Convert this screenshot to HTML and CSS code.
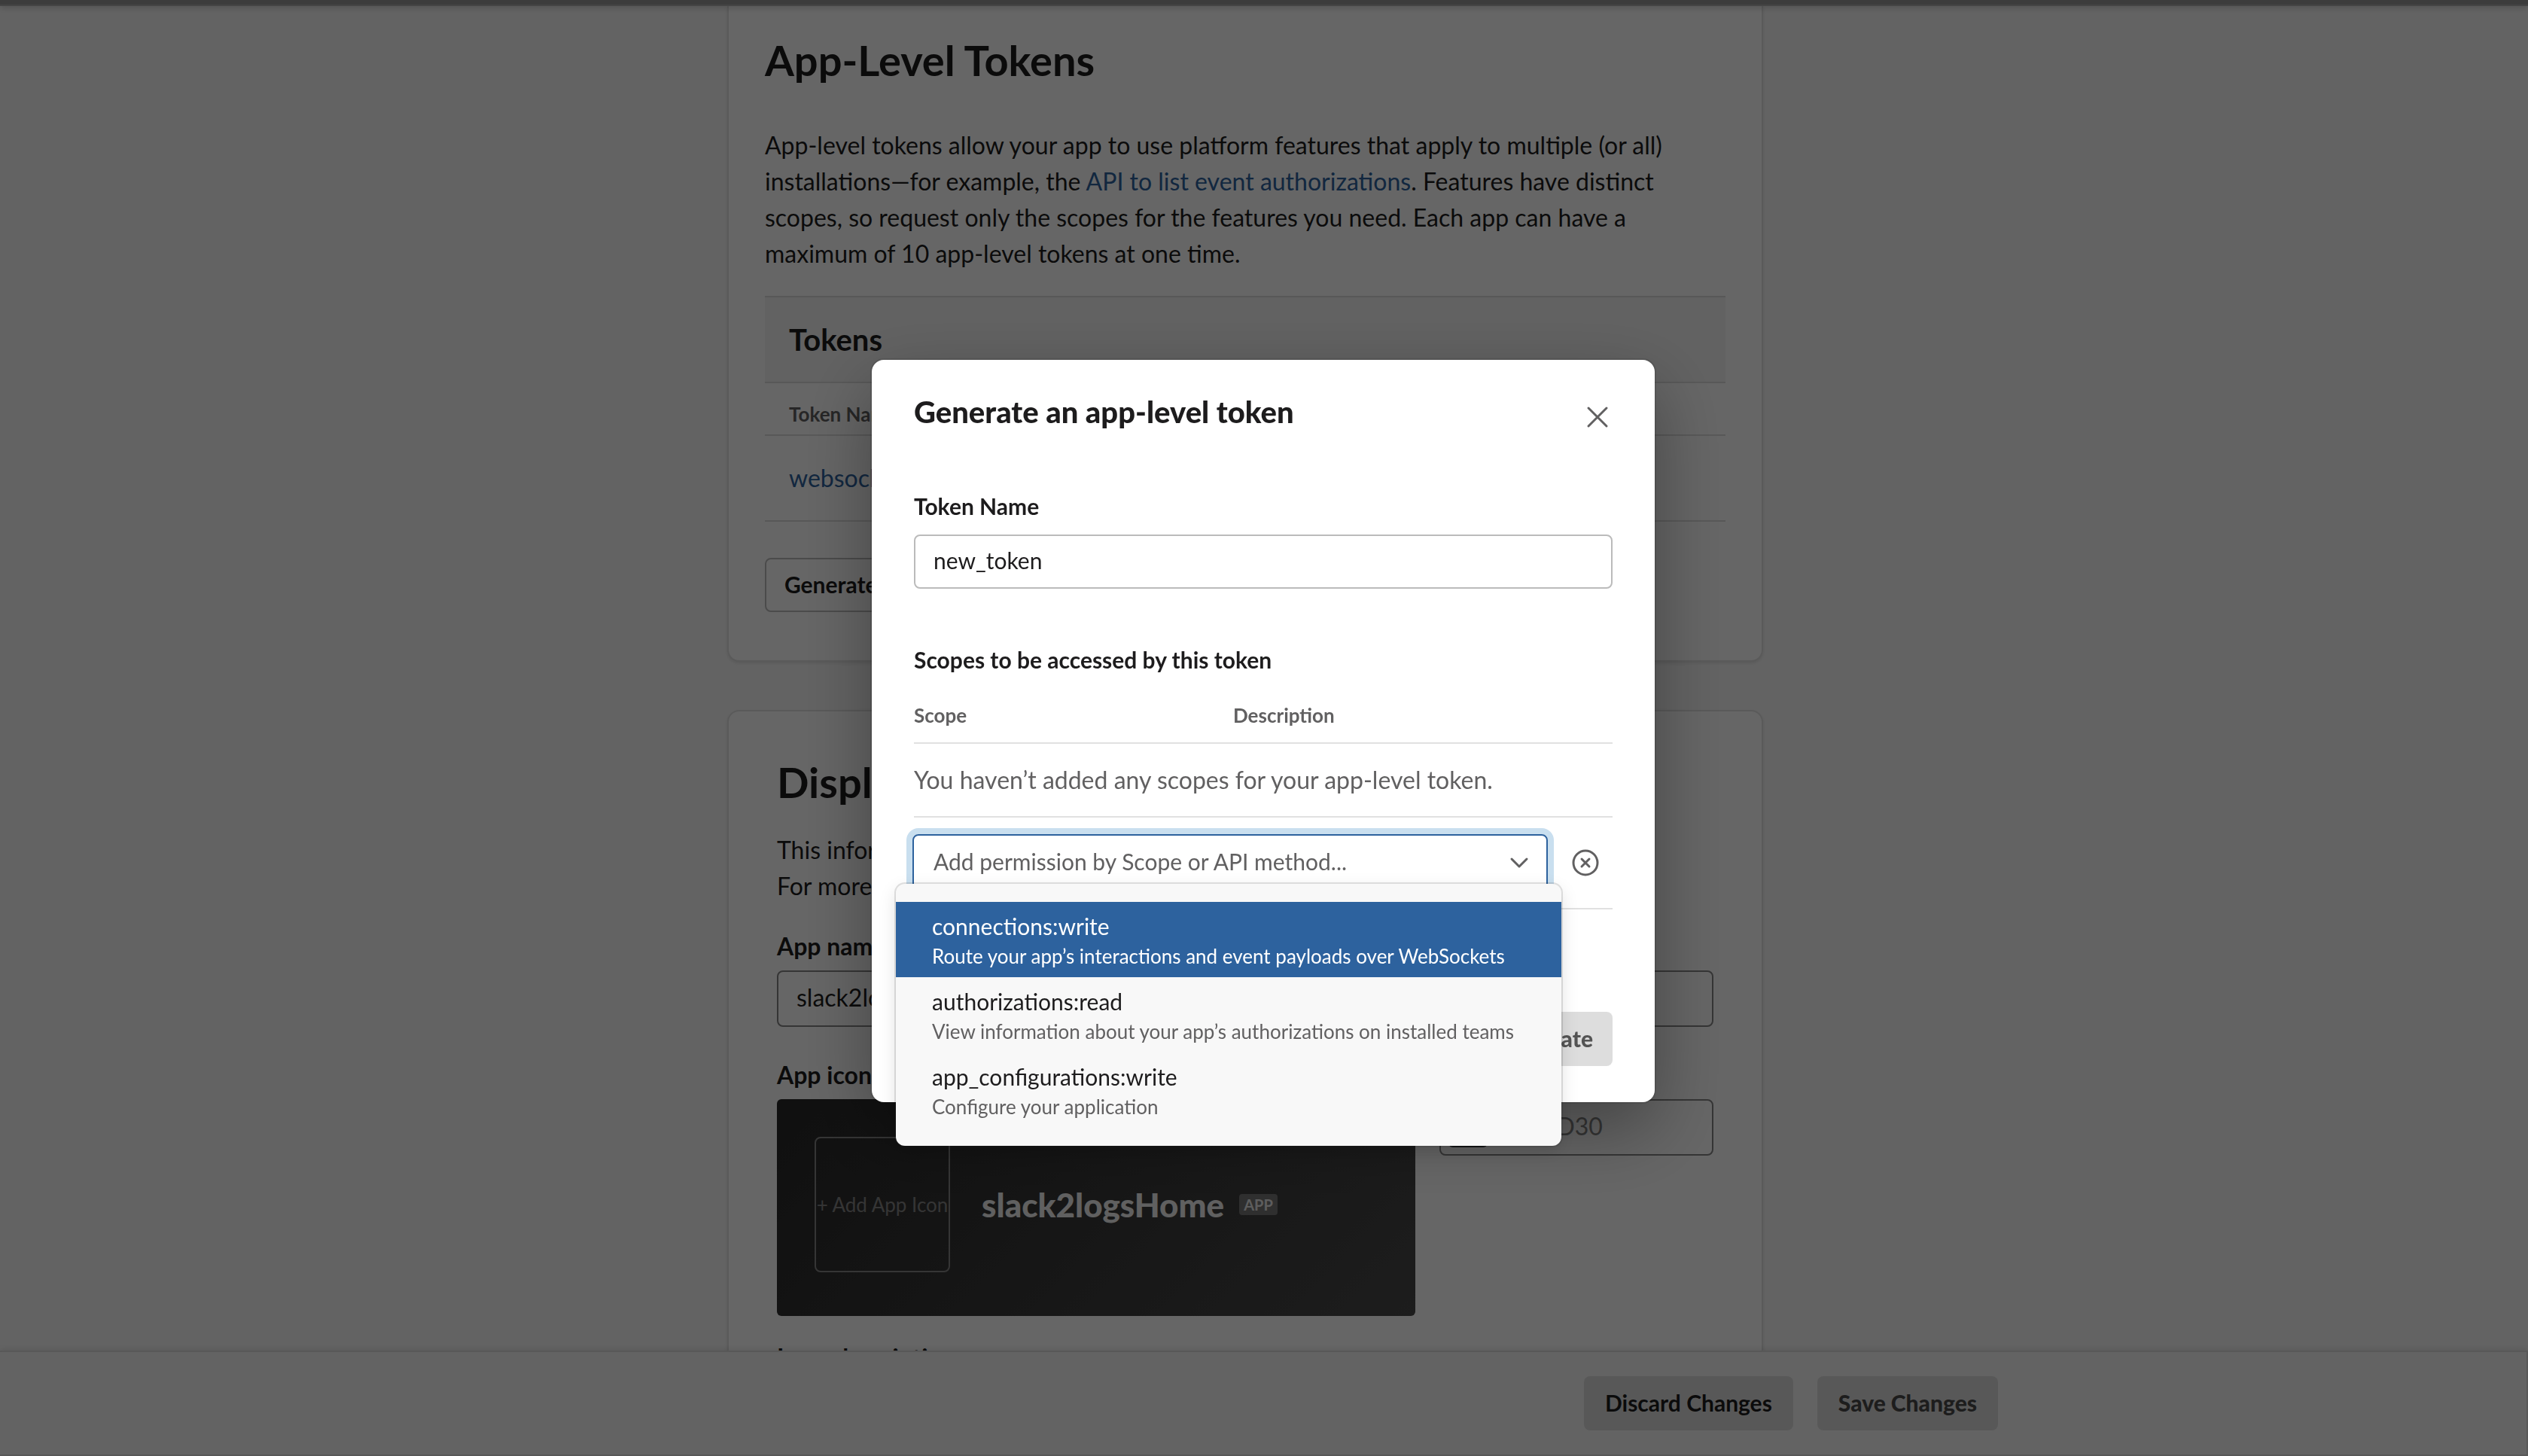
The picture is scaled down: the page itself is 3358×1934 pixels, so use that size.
FILE: index.html
```html
<!DOCTYPE html>
<html lang="en">
<head>
<meta charset="utf-8">
<title>App-Level Tokens</title>
<link rel="stylesheet" href="styles.css">
</head>
<body>
<div class="page">
  <header class="topbar"></header>

  <main class="content">
    <section class="card card--tokens">
      <h1 class="card-title">App-Level Tokens</h1>
      <p class="lead">App-level tokens allow your app to use platform features that apply to multiple (or all) installations—for example, the <a class="link" href="#">API to list event authorizations</a>. Features have distinct scopes, so request only the scopes for the features you need. Each app can have a maximum of 10 app-level tokens at one time.</p>
      <table class="tokens">
        <caption class="tokens-caption">Tokens</caption>
        <thead><tr><th scope="col">Token Name</th></tr></thead>
        <tbody><tr><td><a class="link" href="#">websocket</a></td></tr></tbody>
      </table>
      <button class="btn btn--outline" type="button">Generate Token and Scopes</button>
    </section>

    <section class="card card--display">
      <h1 class="card-title">Display Information</h1>
      <p class="info">This information will be shown in the Slack App Directory.<br>For more details, view our guidelines.</p>
      <label class="label" for="app-name">App name</label>
      <input class="field field--page" id="app-name" type="text" value="slack2logsHome">
      <div class="branding">
        <div class="branding-icon">
          <span class="label">App icon</span>
          <div class="preview">
            <button class="add-icon" type="button">+ Add App Icon</button>
            <strong class="preview-name">slack2logsHome</strong>
            <span class="badge">APP</span>
          </div>
        </div>
        <div class="branding-color">
          <label class="label" for="bg-color">Color</label>
          <div class="color-field">
            <span class="swatch"></span>
            <input class="color-input" id="bg-color" type="text" placeholder="#2C2D30">
          </div>
        </div>
      </div>
      <label class="label" for="long-description">Long description</label>
      <textarea class="field field--page" id="long-description"></textarea>
    </section>
  </main>

  <footer class="savebar">
    <div class="savebar-inner">
      <button class="btn btn--solid" type="button">Discard Changes</button>
      <button class="btn btn--solid btn--disabled" type="button" disabled>Save Changes</button>
    </div>
  </footer>
</div>

<div class="overlay">
  <div class="modal" role="dialog" aria-labelledby="modal-title">
    <div class="modal-head">
      <h2 class="modal-title" id="modal-title">Generate an app-level token</h2>
      <button class="icon-btn" type="button" aria-label="Close">
        <svg width="36" height="36" viewBox="0 0 36 36" fill="none" stroke="currentColor" stroke-width="3" stroke-linecap="round"><path d="M6 6 30 30M30 6 6 30"/></svg>
      </button>
    </div>

    <label class="modal-label" for="token-name">Token Name</label>
    <input class="field field--modal" id="token-name" type="text" value="new_token">

    <h3 class="modal-label modal-label--scopes">Scopes to be accessed by this token</h3>
    <table class="scopes">
      <thead><tr><th scope="col">Scope</th><th scope="col">Description</th></tr></thead>
      <tbody><tr><td colspan="2">You haven’t added any scopes for your app-level token.</td></tr></tbody>
    </table>
    <div class="scope-row">
      <div class="combo">
        <input class="combo-input" type="text" role="combobox" aria-label="Scope" aria-expanded="true" placeholder="Add permission by Scope or API method...">
        <svg class="combo-arrow" width="28" height="20" viewBox="0 0 28 20" fill="none" stroke="currentColor" stroke-width="3" stroke-linecap="round" stroke-linejoin="round"><path d="M4 5 14 15 24 5"/></svg>
        <ul class="menu" role="listbox">
          <li class="option option--active" role="option" aria-selected="true"><span class="option-name">connections:write</span><span class="option-text">Route your app’s interactions and event payloads over WebSockets</span></li>
          <li class="option" role="option"><span class="option-name">authorizations:read</span><span class="option-text">View information about your app’s authorizations on installed teams</span></li>
          <li class="option" role="option"><span class="option-name">app_configurations:write</span><span class="option-text">Configure your application</span></li>
        </ul>
      </div>
      <button class="icon-btn" type="button" aria-label="Remove">
        <svg width="40" height="40" viewBox="0 0 40 40" fill="none" stroke="currentColor" stroke-width="3" stroke-linecap="round"><circle cx="20" cy="20" r="16"/><path d="M15 15 25 25M25 15 15 25"/></svg>
      </button>
    </div>

    <div class="modal-foot">
      <button class="btn btn--solid btn--muted" type="button" disabled>Generate</button>
    </div>
  </div>
</div>
</body>
</html>
```

FILE: styles.css
```css
* { box-sizing: border-box; }

body {
  margin: 0;
  font-family: Lato, "Liberation Sans", sans-serif;
  font-size: 32px;
  line-height: 48px;
  color: #1d1c1d;
  background: #f8f8f8;
}

h1, h2, h3, p, ul { margin: 0; padding: 0; }
button, input, textarea { font: inherit; color: inherit; }

.page {
  display: flex;
  flex-direction: column;
  height: 100vh;
  overflow: hidden;
}

.topbar {
  flex: none;
  height: 8px;
  background: #969696;
  border-bottom: 2px solid #aaa;
  box-shadow: 0 2px 8px rgba(0, 0, 0, .2);
  z-index: 1;
}

.content {
  flex: 1;
  min-height: 0;
  overflow: hidden;
  display: flex;
  flex-direction: column;
  align-items: center;
  gap: 64px;
  padding-right: 50px;
}

.card {
  flex: none;
  width: 100%;
  max-width: 1376px;
  background: #fff;
  border: 2px solid #e1e1e1;
  border-radius: 16px;
  box-shadow: 0 2px 4px rgba(0, 0, 0, .1);
}

.card--tokens {
  border-top: 0;
  border-radius: 0 0 16px 16px;
  padding: 38px 48px 64px;
}

.card--display { padding: 60px 64px; }

.card-title {
  font-size: 56px;
  line-height: 68px;
  font-weight: 700;
}

.lead { margin: 55px 0 32px; }

.link { color: #2d629e; text-decoration: none; }

.tokens,
.scopes {
  width: 100%;
  border-collapse: separate;
  border-spacing: 0;
}

.tokens { margin-bottom: 48px; }

.tokens-caption {
  padding: 32px;
  text-align: left;
  font-size: 40px;
  font-weight: 700;
  background: #f4f4f4;
  border-top: 2px solid #ddd;
  border-bottom: 2px solid #ddd;
}

.tokens th,
.tokens td {
  padding: 0 32px;
  text-align: left;
  border-bottom: 2px solid #ddd;
}

.tokens th {
  height: 70px;
  padding-top: 14px;
  font-size: 26px;
  font-weight: 700;
  color: #616061;
}

.tokens td { height: 114px; }

.btn {
  height: 72px;
  padding: 0 24px 2px;
  border: 2px solid transparent;
  border-radius: 8px;
  font-size: 30px;
  line-height: 40px;
  font-weight: 700;
}

.btn--outline { background: #fff; border-color: #bbb; }
.btn--solid { background: #ddd; }
.btn--disabled { color: #4a4a4a; font-weight: 900; }
.btn--muted { color: #545454; font-weight: 900; }

.info { margin: 32px 0; }

.label { display: block; font-weight: 700; }

.field {
  display: block;
  width: 100%;
  background: #fff;
  border: 2px solid #bbb;
  border-radius: 8px;
  padding: 0 24px 4px;
}

.field--page {
  height: 75px;
  margin: 8px 0 40px;
  border-color: #868686;
}

.branding {
  display: flex;
  gap: 32px;
  margin-bottom: 31px;
}

.branding-icon { flex: 7 1 0; min-width: 0; }
.branding-color { flex: 3 1 0; min-width: 0; }

.preview {
  display: flex;
  align-items: center;
  height: 288px;
  margin-top: 8px;
  padding: 0 50px 8px;
  border-radius: 6px;
  background: linear-gradient(135deg, #282828, #494949);
}

.add-icon {
  width: 180px;
  height: 180px;
  padding: 0;
  border: 2px solid #868686;
  border-radius: 8px;
  background: none;
  color: #868686;
  font-size: 26px;
  white-space: nowrap;
}

.preview-name {
  margin: 0 20px 0 42px;
  font-size: 44px;
  font-weight: 900;
  color: #f0f0f0;
}

.badge {
  padding: 0 6px;
  border-radius: 4px;
  background: #757575;
  color: #e8e8e8;
  font-size: 20px;
  line-height: 28px;
  font-weight: 700;
}

.color-field {
  display: flex;
  align-items: center;
  gap: 14px;
  height: 75px;
  margin-top: 8px;
  padding: 0 10px;
  border: 2px solid #868686;
  border-radius: 8px;
}

.swatch {
  flex: none;
  width: 52px;
  height: 52px;
  border-radius: 6px;
  background: #2c2d30;
}

.color-input {
  flex: 1;
  min-width: 0;
  padding: 0 0 4px;
  border: 0;
  background: none;
}

.color-input::placeholder { color: #868686; }

.savebar {
  flex: none;
  padding: 32px 0;
  background: #f8f8f8;
  border: 2px solid #ddd;
  border-left: 0;
  box-shadow: 0 -2px 8px rgba(0, 0, 0, .1);
  z-index: 1;
}

.savebar-inner {
  display: flex;
  justify-content: flex-end;
  gap: 32px;
  max-width: 1952px;
  margin: 0 auto;
}

.savebar .btn { padding: 0 26px 2px; }

.overlay {
  position: fixed;
  inset: 0;
  z-index: 2;
  display: flex;
  align-items: center;
  justify-content: center;
  padding: 8px 2px 0 0;
  background: rgba(0, 0, 0, .6);
}

.modal {
  width: 1040px;
  padding: 44px 56px 48px;
  background: #fff;
  border-radius: 16px;
  box-shadow: 0 0 0 2px rgba(29, 28, 29, .13), 0 36px 96px rgba(0, 0, 0, .35);
}

.modal-head {
  display: flex;
  align-items: flex-end;
  justify-content: space-between;
  padding-right: 2px;
  margin-bottom: 80px;
}

.modal-title {
  font-size: 40px;
  line-height: 50px;
  font-weight: 900;
}

.icon-btn {
  display: flex;
  padding: 0;
  border: 0;
  background: none;
  color: #616061;
}

.modal-label {
  display: block;
  font-size: 30px;
  line-height: 40px;
  font-weight: 700;
}

.modal-label--scopes { margin-top: 74px; }

.field--modal {
  height: 72px;
  margin-top: 18px;
  font-size: 30px;
}

.scopes {
  table-layout: fixed;
  color: #616061;
}

.scopes th,
.scopes td {
  padding: 0;
  text-align: left;
  border-bottom: 2px solid #e1e1e1;
}

.scopes th {
  height: 92px;
  padding-top: 18px;
  font-size: 26px;
  font-weight: 700;
}

.scopes th:first-child { width: 424px; }
.scopes td { height: 98px; }

.scope-row {
  display: flex;
  align-items: center;
  justify-content: space-between;
  height: 122px;
  padding-right: 16px;
  border-bottom: 2px solid #e1e1e1;
}

.combo {
  position: relative;
  display: flex;
  align-items: center;
  width: 844px;
  height: 76px;
  margin-left: -2px;
  padding: 0 22px 0 26px;
  border: 2px solid #2d629e;
  border-radius: 8px;
  box-shadow: 0 0 0 8px #c9dfef;
  color: #616061;
}

.combo-input {
  flex: 1;
  padding: 0 0 4px;
  border: 0;
  outline: 0;
  background: none;
  font-size: 30px;
}

.combo-input::placeholder { color: #616061; opacity: 1; }

.menu {
  position: absolute;
  top: 64px;
  left: -24px;
  width: 884px;
  padding: 24px 0;
  list-style: none;
  background: #f8f8f8;
  border-radius: 12px;
  box-shadow: 0 0 0 2px rgba(29, 28, 29, .13), 0 8px 24px rgba(0, 0, 0, .12);
}

.option {
  display: flex;
  flex-direction: column;
  height: 100px;
  padding: 12px 48px 0;
  color: #1d1c1d;
}

.option-name,
.option-text { line-height: 40px; }
.option-name { font-size: 30px; }
.option-text { font-size: 26px; color: #616061; }
.option--active { background: #2d629e; color: #fff; }
.option--active .option-text { color: #fff; }

.modal-foot {
  display: flex;
  justify-content: flex-end;
  margin-top: 136px;
}
```
